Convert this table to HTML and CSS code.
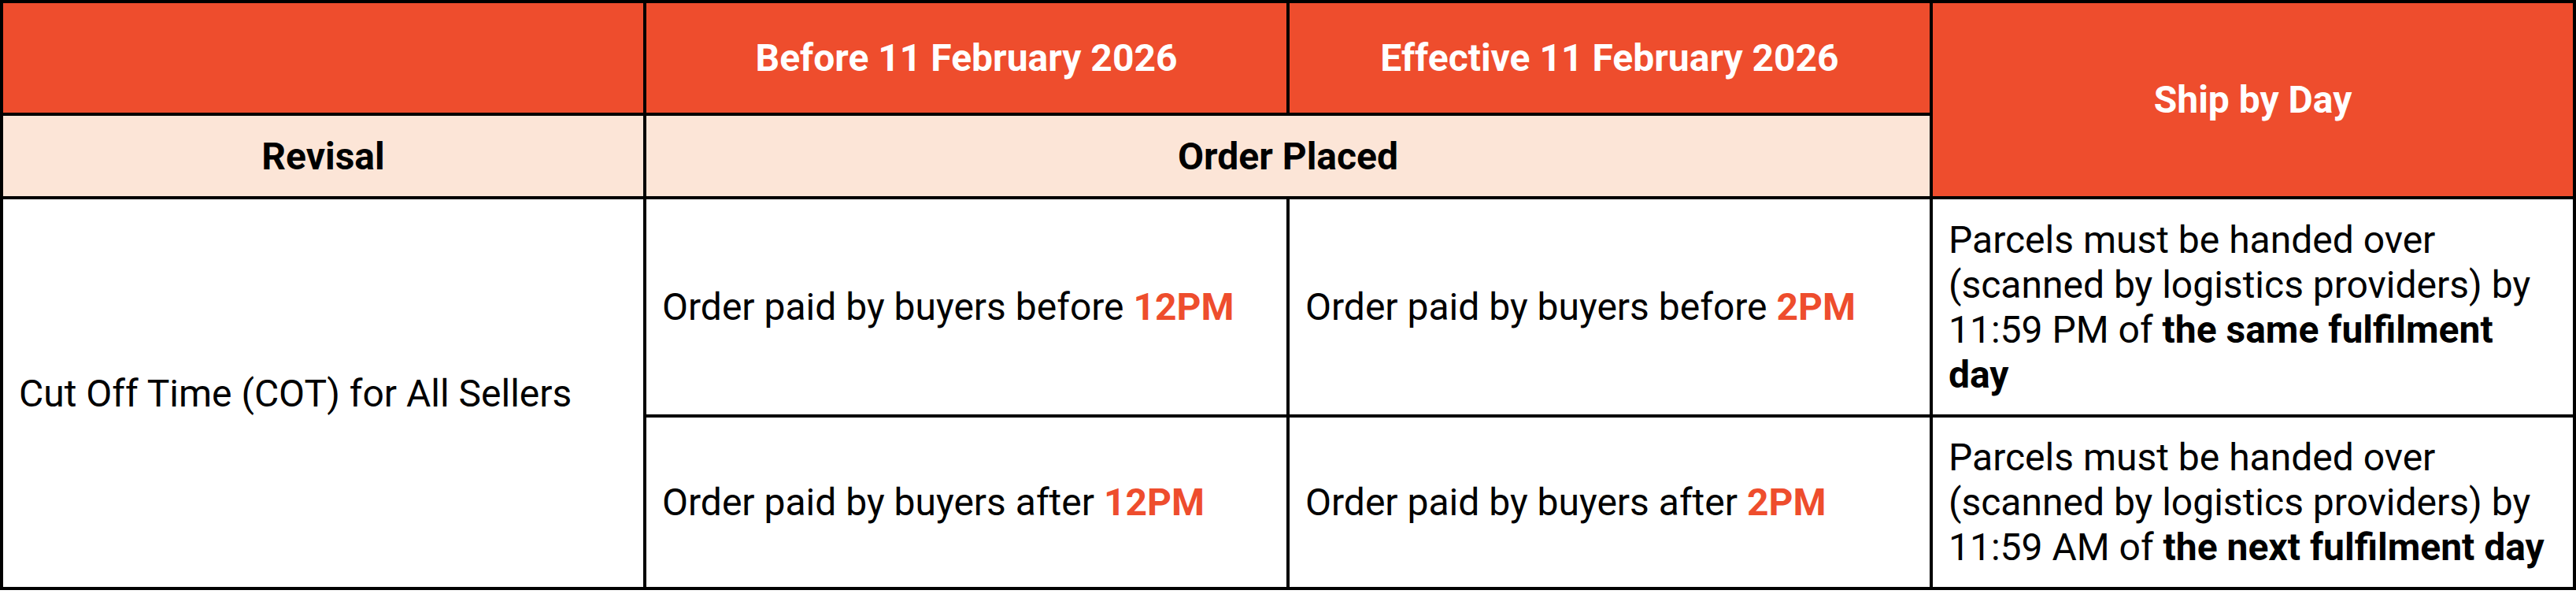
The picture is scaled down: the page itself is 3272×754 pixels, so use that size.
FILE: index.html
```html
<!DOCTYPE html>
<html lang="en">
<head>
<meta charset="utf-8">
<title>Cut Off Time</title>
<link rel="stylesheet" href="styles.css">
</head>
<body>
<table class="cot">
  <colgroup>
    <col class="c"><col class="c"><col class="c"><col class="c">
  </colgroup>
  <tr class="r-head">
    <th class="h-orange"></th>
    <th class="h-orange">Before 11 February 2026</th>
    <th class="h-orange">Effective 11 February 2026</th>
    <th class="h-orange" rowspan="2">Ship by Day</th>
  </tr>
  <tr class="r-sub">
    <th class="h-peach">Revisal</th>
    <th class="h-peach" colspan="2">Order Placed</th>
  </tr>
  <tr class="r-b1">
    <td class="cell" rowspan="2">Cut Off Time (COT) for All Sellers</td>
    <td class="cell">Order paid by buyers before <b class="hl">12PM</b></td>
    <td class="cell">Order paid by buyers before <b class="hl">2PM</b></td>
    <td class="cell">Parcels must be handed over (scanned by logistics providers) by 11:59 PM of <b>the same fulfilment day</b></td>
  </tr>
  <tr class="r-b2">
    <td class="cell">Order paid by buyers after <b class="hl">12PM</b></td>
    <td class="cell">Order paid by buyers after <b class="hl">2PM</b></td>
    <td class="cell">Parcels must be handed over (scanned by logistics providers) by 11:59 AM of <b>the next fulfilment day</b></td>
  </tr>
</table>
</body>
</html>
```
FILE: styles.css
```css
html, body {
  margin: 0;
  padding: 0;
  background: #ffffff;
}
body {
  font-family: Roboto, "Liberation Sans", Arial, sans-serif;
  font-size: 48px;
  line-height: 57px;
  color: #000000;
}
.cot {
  width: 3272px;
  table-layout: fixed;
  border-collapse: separate;
  border-spacing: 0;
  border-top: 4px solid #000;
  border-left: 4px solid #000;
}
.c {
  width: 25%;
}
.cot th,
.cot td {
  border-right: 4px solid #000;
  border-bottom: 4px solid #000;
  padding: 0 20px;
  vertical-align: middle;
}
.r-head { height: 143px; }
.r-sub { height: 106px; }
.r-b1 { height: 277px; }
.r-b2 { height: 219px; }
.h-orange {
  background: #ee4d2d;
  color: #ffffff;
  font-weight: 700;
  text-align: center;
}
.h-peach {
  background: #fce5d7;
  color: #000000;
  font-weight: 700;
  text-align: center;
}
.cell {
  text-align: left;
  font-weight: 400;
}
.cell b {
  font-weight: 700;
}
.hl {
  color: #ee4d2d;
}
```
